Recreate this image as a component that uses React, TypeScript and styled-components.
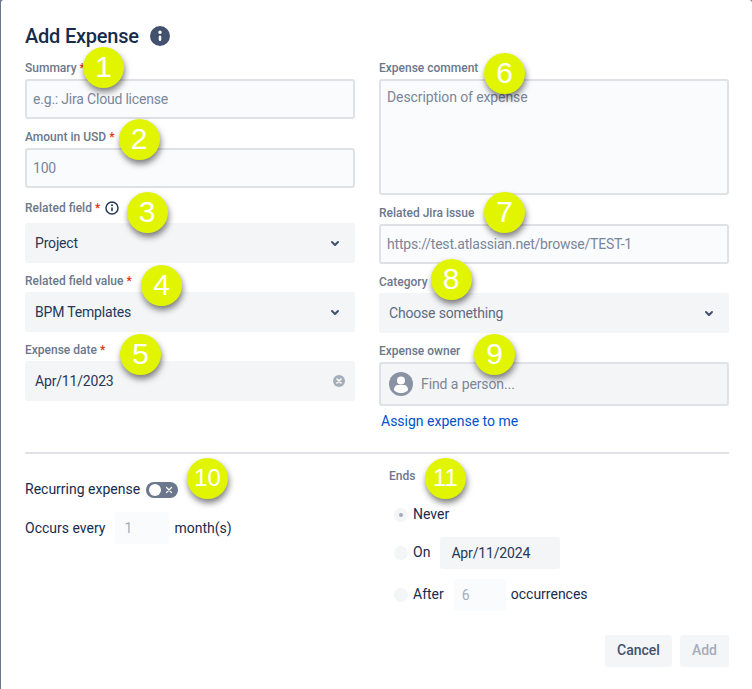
import React from "react";
import styled, { createGlobalStyle } from "styled-components";

const Global = createGlobalStyle`
  html, body { margin: 0; padding: 0; background: #fff; }
  body { font-family: Roboto, "Liberation Sans", sans-serif; color: #172b4d; }
  * { box-sizing: border-box; }
`;

const Backdrop = styled.div`
  position: relative;
  width: 752px;
  height: 689px;
  overflow: hidden;
  padding-left: 1px;
  background: #6b778c;
`;

const Dialog = styled.div`
  width: 751px;
  height: 689px;
  padding: 22px 23px 0 24px;
  border-radius: 3px 3px 0 0;
  background: #fff;
`;

const TitleRow = styled.header`
  display: flex;
  align-items: center;
  gap: 11px;
  height: 28px;
`;

const Title = styled.h1`
  margin: 0;
  font-size: 20px;
  line-height: 28px;
  font-weight: 500;
  letter-spacing: -0.22px;
  color: #172b4d;
`;

const Columns = styled.div`
  display: grid;
  grid-template-columns: 330px 350px;
  column-gap: 24px;
`;

const Column = styled.div`
  display: flex;
  flex-direction: column;
`;

const LabelRow = styled.label<{ $tall?: boolean }>`
  display: flex;
  align-items: center;
  height: ${(p) => (p.$tall ? "35px" : "29px")};
  padding: ${(p) => (p.$tall ? "12px 0 7px" : "10px 0 3px")};
  font-size: 12px;
  line-height: 16px;
  font-weight: 500;
  color: #6b778c;
`;

const Star = styled.span`
  margin-left: 3px;
  color: #de350b;
`;

const HelpIcon = styled.svg`
  margin-left: 5px;
  width: 14px;
  height: 14px;
`;

const TextInput = styled.input`
  display: block;
  width: 100%;
  height: 40px;
  padding: 0 6px;
  border: 2px solid #dfe1e6;
  border-radius: 3px;
  background: #fafbfc;
  font: 400 14px/20px Roboto, sans-serif;
  letter-spacing: -0.2px;
  color: #172b4d;
  outline: none;
  &::placeholder { color: #7a869a; opacity: 1; }
`;

const TextArea = styled.textarea`
  display: block;
  width: 100%;
  height: 116px;
  padding: 6px;
  border: 2px solid #dfe1e6;
  border-radius: 3px;
  background: #fafbfc;
  font: 400 14px/20px Roboto, sans-serif;
  letter-spacing: -0.1px;
  color: #172b4d;
  outline: none;
  resize: none;
  &::placeholder { color: #7a869a; opacity: 1; }
`;

const SelectBox = styled.div<{ $muted?: boolean }>`
  display: flex;
  align-items: center;
  justify-content: space-between;
  height: 40px;
  padding: 0 8px 0 10px;
  border-radius: 3px;
  background: #f4f5f7;
  font-size: 14px;
  letter-spacing: -0.18px;
  color: ${(p) => (p.$muted ? "#5e6c84" : "#253858")};
`;

const ClearIcon = styled.svg`
  width: 12px;
  height: 12px;
  margin-right: 2px;
`;

const Chevron = styled.svg`
  width: 24px;
  height: 24px;
  flex: none;
`;

const PersonBox = styled.div`
  display: flex;
  align-items: center;
  gap: 8px;
  height: 44px;
  padding: 0 8px;
  border: 2px solid #dfe1e6;
  border-radius: 3px;
  background: #f4f5f7;
  font-size: 14px;
  letter-spacing: -0.1px;
  color: #7a869a;
`;

const AssignLink = styled.a`
  display: block;
  margin: 6px 0 0 2px;
  font-size: 14px;
  line-height: 18px;
  color: #0052cc;
  text-decoration: none;
`;

const Divider = styled.hr`
  height: 2px;
  margin: 22px 0 0;
  border: 0;
  background: #dfe1e6;
`;

const LowerGrid = styled.div`
  display: grid;
  grid-template-columns: 364px 1fr;
`;

const InlineRow = styled.div<{ $top?: number; $gap?: number }>`
  display: flex;
  align-items: center;
  gap: ${(p) => p.$gap ?? 5}px;
  margin-top: ${(p) => p.$top ?? 0}px;
  font-size: 14px;
  color: #172b4d;
`;

const RaisedText = styled.span`
  margin: -1px 0 1px;
`;

const Toggle = styled.span`
  display: flex;
  align-items: center;
  justify-content: space-between;
  width: 32px;
  height: 16px;
  padding: 0 5px 0 3px;
  border-radius: 8px;
  background: #6b778c;
`;

const Knob = styled.span`
  width: 12px;
  height: 12px;
  border-radius: 50%;
  background: #fff;
`;

const SmallField = styled.div<{ $width: number; $pad: number; $strong?: boolean; $lead?: number }>`
  display: flex;
  align-items: center;
  width: ${(p) => p.$width}px;
  height: 32px;
  margin-left: ${(p) => p.$lead ?? 0}px;
  padding-left: ${(p) => p.$pad}px;
  border-radius: 3px;
  background: ${(p) => (p.$strong ? "#f4f5f7" : "#fafbfc")};
  font-size: 14px;
  letter-spacing: ${(p) => (p.$strong ? "-0.15px" : "0")};
  color: ${(p) => (p.$strong ? "#253858" : "#a5adba")};
`;

const EndsLabel = styled.div`
  height: 16px;
  margin-top: 14px;
  font-size: 12px;
  line-height: 16px;
  font-weight: 500;
  color: #6b778c;
`;

const Radio = styled.span<{ $checked?: boolean }>`
  display: flex;
  align-items: center;
  justify-content: center;
  width: 14px;
  height: 14px;
  border-radius: 50%;
  background: #f4f5f7;
  &::after {
    content: "";
    display: ${(p) => (p.$checked ? "block" : "none")};
    width: 4px;
    height: 4px;
    border-radius: 50%;
    background: #a5adba;
  }
`;

const RadioRow = styled(InlineRow)`
  margin-left: 5px;
  min-height: 28px;
`;

const Footer = styled.footer`
  display: flex;
  justify-content: flex-end;
  gap: 8px;
  margin-top: 24px;
`;

const Button = styled.button<{ $disabled?: boolean }>`
  height: 32px;
  padding: 0 12px 2px;
  border: 0;
  border-radius: 3px;
  background: #f4f5f7;
  font: 500 14px/20px Roboto, sans-serif;
  color: ${(p) => (p.$disabled ? "#a5adba" : "#42526e")};
`;

const Badge = styled.span<{ $x: number; $y: number; $wide?: boolean }>`
  position: absolute;
  left: ${(p) => p.$x - 20.5}px;
  top: ${(p) => p.$y - 20.5}px;
  display: flex;
  align-items: center;
  justify-content: center;
  width: 41px;
  height: 41px;
  border-radius: 50%;
  background: #e2f500;
  box-shadow: 1px 4px 6px rgba(0, 0, 0, 0.5);
  font: 400 ${(p) => (p.$wide ? "24px" : "30px")}/1 "Liberation Sans", Arial, sans-serif;
  color: #fff;
`;

const ChevronDown = () => (
  <Chevron viewBox="0 0 24 24" aria-hidden>
    <path
      fill="#42526e"
      d="M8.292 10.293a1.009 1.009 0 0 0 0 1.419l2.939 2.965c.218.215.5.322.779.322s.556-.107.769-.322l2.93-2.955a1.01 1.01 0 0 0 0-1.419.987.987 0 0 0-1.406 0l-2.298 2.317-2.307-2.327a.99.99 0 0 0-1.406 0z"
    />
  </Chevron>
);

const Field = ({ label, required, tall, help, children }: { label: string; required?: boolean; tall?: boolean; help?: boolean; children: React.ReactNode }) => (
  <div>
    <LabelRow $tall={tall}>
      {label}
      {required && <Star>*</Star>}
      {help && (
        <HelpIcon viewBox="0 0 14 14" aria-hidden>
          <circle cx="7" cy="7" r="6" fill="none" stroke="#253858" strokeWidth="1.5" />
          <rect x="6.2" y="6.2" width="1.6" height="4" rx=".7" fill="#253858" />
          <circle cx="7" cy="4.3" r="1" fill="#253858" />
        </HelpIcon>
      )}
    </LabelRow>
    {children}
  </div>
);

const badges = [
  { n: 1, x: 103.5, y: 67 },
  { n: 2, x: 139, y: 139 },
  { n: 3, x: 147, y: 212 },
  { n: 4, x: 161.5, y: 285 },
  { n: 5, x: 140.5, y: 354 },
  { n: 6, x: 504.5, y: 73 },
  { n: 7, x: 504.5, y: 212 },
  { n: 8, x: 451, y: 279 },
  { n: 9, x: 494.5, y: 354 },
  { n: 10, x: 207.5, y: 478 },
  { n: 11, x: 445.5, y: 478 },
];

export default function App() {
  return (
    <Backdrop>
      <Global />
      <Dialog>
        <TitleRow>
          <Title>Add Expense</Title>
          <svg width="20" height="20" viewBox="4 4 16 16" aria-hidden>
            <path
              fill="#42526e"
              d="M12 20a8 8 0 1 1 0-16 8 8 0 0 1 0 16zm0-8.5a1 1 0 0 0-1 1V15a1 1 0 0 0 2 0v-2.5a1 1 0 0 0-1-1zm0-1.125a1.375 1.375 0 1 0 0-2.75 1.375 1.375 0 0 0 0 2.75z"
            />
          </svg>
        </TitleRow>
        <Columns>
          <Column>
            <Field label="Summary" required>
              <TextInput placeholder="e.g.: Jira Cloud license" />
            </Field>
            <Field label="Amount in USD" required>
              <TextInput placeholder="100" />
            </Field>
            <Field label="Related field" required tall help>
              <SelectBox>
                Project
                <ChevronDown />
              </SelectBox>
            </Field>
            <Field label="Related field value" required>
              <SelectBox>
                BPM Templates
                <ChevronDown />
              </SelectBox>
            </Field>
            <Field label="Expense date" required>
              <SelectBox>
                Apr/11/2023
                <ClearIcon viewBox="0 0 12 12" aria-hidden>
                  <circle cx="6" cy="6" r="6" fill="#a5adba" />
                  <path d="M4 4l4 4M8 4l-4 4" stroke="#fff" strokeWidth="1.6" strokeLinecap="round" />
                </ClearIcon>
              </SelectBox>
            </Field>
          </Column>
          <Column>
            <Field label="Expense comment">
              <TextArea placeholder="Description of expense" />
            </Field>
            <Field label="Related Jira issue">
              <TextInput placeholder="https://test.atlassian.net/browse/TEST-1" />
            </Field>
            <Field label="Category">
              <SelectBox $muted>
                Choose something
                <ChevronDown />
              </SelectBox>
            </Field>
            <Field label="Expense owner">
              <PersonBox>
                <svg width="24" height="24" viewBox="0 0 24 24" aria-hidden>
                  <circle cx="12" cy="12" r="12" fill="#8993a4" />
                  <circle cx="12" cy="8.5" r="4" fill="#fff" />
                  <path fill="#fff" d="M5 18c0-3.5 2-5 4-5h6c2 0 4 1.5 4 5 0 .8-3 3-7 3s-7-2.2-7-3z" />
                </svg>
                Find a person...
              </PersonBox>
            </Field>
            <AssignLink href="#">Assign expense to me</AssignLink>
          </Column>
        </Columns>
        <Divider />
        <LowerGrid>
          <Column>
            <InlineRow $top={28} $gap={6}>
              <RaisedText>Recurring expense</RaisedText>
              <Toggle>
                <Knob />
                <svg width="8" height="8" viewBox="0 0 8 8" aria-hidden>
                  <path d="M1.5 1.5l5 5M6.5 1.5l-5 5" stroke="#fff" strokeWidth="1.3" strokeLinecap="round" />
                </svg>
              </Toggle>
            </InlineRow>
            <InlineRow $top={14} $gap={5}>
              Occurs every
              <SmallField $width={54} $pad={9} $lead={5}>1</SmallField>
              month(s)
            </InlineRow>
          </Column>
          <Column>
            <EndsLabel>Ends</EndsLabel>
            <RadioRow $top={17}>
              <Radio $checked />
              <RaisedText>Never</RaisedText>
            </RadioRow>
            <RadioRow $top={8}>
              <Radio />
              <RaisedText>On</RaisedText>
              <SmallField $width={120} $pad={11} $strong $lead={5}>Apr/11/2024</SmallField>
            </RadioRow>
            <RadioRow $top={10}>
              <Radio />
              <RaisedText>After</RaisedText>
              <SmallField $width={52} $pad={8} $lead={5}>6</SmallField>
              <RaisedText>occurrences</RaisedText>
            </RadioRow>
          </Column>
        </LowerGrid>
        <Footer>
          <Button>Cancel</Button>
          <Button $disabled>Add</Button>
        </Footer>
      </Dialog>
      {badges.map((b) => (
        <Badge key={b.n} $x={b.x} $y={b.y} $wide={b.n > 9}>{b.n}</Badge>
      ))}
    </Backdrop>
  );
}
